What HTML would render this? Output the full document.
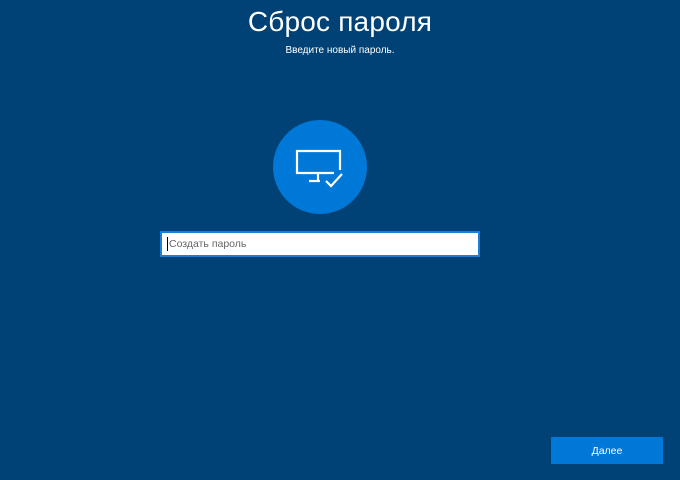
<!DOCTYPE html>
<html><head><meta charset="utf-8"><style>
html,body{margin:0;padding:0}
body{width:680px;height:480px;background:#004275;position:relative;overflow:hidden;font-family:"Liberation Sans","DejaVu Sans",sans-serif;color:#fff}
h1{position:absolute;top:6px;left:0;width:680px;text-align:center;margin:0;font-weight:300;font-size:28px;letter-spacing:0.2px}
.sub{position:absolute;top:45px;left:0;width:680px;text-align:center;font-size:10px}
.circ{position:absolute;left:273px;top:120px;width:94px;height:94px;border-radius:50%;background:#0078d7}
.inp{position:absolute;left:160px;top:231px;width:316px;height:22px;background:#fff;border:2px solid #1a7fd6;box-sizing:content-box}
.inp span{position:absolute;left:7px;top:5px;font-size:10.5px;color:#666}
.inp i{position:absolute;left:5px;top:4px;width:1px;height:14px;background:#000}
.btn{position:absolute;left:551px;top:437px;width:112px;height:27px;background:#0078d7;font-size:10.5px;text-align:center;line-height:28px}
</style></head><body>
<h1>Сброс пароля</h1>
<div class="sub">Введите новый пароль.</div>
<div class="circ"></div>
<svg style="position:absolute;left:0;top:0" width="680" height="480">
<g fill="none" stroke="#fff" stroke-width="2.2">
<path d="M340 170V151H297V173H334"/>
<path d="M318 174v7M309 181h11"/>
<path d="M326 181l5 5 11-12"/>
</g>
</svg>
<div class="inp"><i></i><span>Создать пароль</span></div>
<div class="btn">Далее</div>
</body></html>
